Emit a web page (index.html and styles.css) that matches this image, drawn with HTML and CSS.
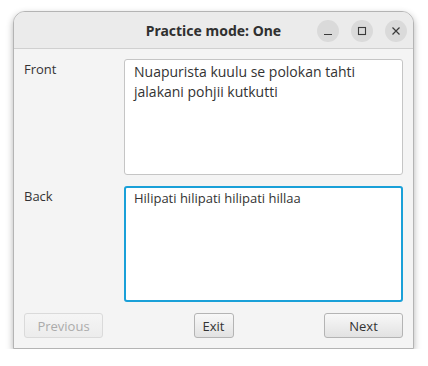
FILE: index.html
```html
<!DOCTYPE html>
<html lang="en">

<head>
  <meta charset="UTF-8">
  <meta name="viewport" content="width=device-width, initial-scale=1.0">
  <title>Practice mode: One</title>
  <link rel="stylesheet" href="styles.css">
</head>

<body>
  <div class="window">
    <header class="titlebar">
      <span></span>
      <h1 class="title">Practice mode: One</h1>
      <div class="controls">
        <button class="ctl" aria-label="Minimize">
          <svg width="10" height="10" viewBox="0 0 10 10"><path d="M1 8.5h8" stroke="#3a3a3a" stroke-width="1.2" /></svg>
        </button>
        <button class="ctl" aria-label="Maximize">
          <svg width="10" height="10" viewBox="0 0 10 10"><rect x="1.5" y="1.5" width="7" height="7" fill="none" stroke="#3a3a3a" stroke-width="1.1" /></svg>
        </button>
        <button class="ctl" aria-label="Close">
          <svg width="10" height="10" viewBox="0 0 10 10"><path d="M1.5 1.5l7 7M8.5 1.5l-7 7" stroke="#3a3a3a" stroke-width="1.2" /></svg>
        </button>
      </div>
    </header>

    <main class="content">
      <label class="field-label" for="front">Front</label>
      <textarea id="front" class="card-text front">Nuapurista kuulu se polokan tahti jalakani pohjii kutkutti</textarea>

      <label class="field-label" for="back">Back</label>
      <textarea id="back" class="card-text focused">Hilipati hilipati hilipati hillaa</textarea>

      <div class="actions">
        <button class="btn prev" disabled>Previous</button>
        <button class="btn exit">Exit</button>
        <button class="btn next">Next</button>
      </div>
    </main>
  </div>
</body>

</html>
```

FILE: styles.css
```css
body {
  margin: 0;
  background: white;
  font-family: "Open Sans", "Noto Sans", sans-serif;
  font-size: 13px;
  color: #333;
}

.window {
  margin: 11px 0 0 13px;
  width: 399px;
  height: 336px;
  border: 1px solid #b4b4b4;
  border-radius: 12px 12px 0 0;
  background: #f4f4f4;
  box-shadow: 0 3px 7px rgba(0, 0, 0, 0.3);
  overflow: hidden;
  display: flex;
  flex-direction: column;
}

.titlebar {
  height: 36px;
  background: #ebebeb;
  border-bottom: 1px solid #d0d0d0;
  display: grid;
  grid-template-columns: 1fr auto 1fr;
  align-items: center;
}

.title {
  margin: 0;
  font-family: "Noto Sans", "Open Sans", sans-serif;
  font-size: 14px;
  font-weight: bold;
  color: #303030;
  padding-top: 1px;
}

.controls {
  display: flex;
  justify-content: flex-end;
  gap: 12px;
  padding-right: 6px;
  padding-top: 1px;
}

.ctl {
  width: 22px;
  height: 22px;
  border-radius: 50%;
  border: none;
  padding: 0;
  background: #dadada;
  display: flex;
  align-items: center;
  justify-content: center;
}

.content {
  flex: 1;
  padding: 10px 10px 10px 10px;
  display: grid;
  grid-template-columns: 100px 1fr;
  grid-template-rows: 116px 116px 25px;
  row-gap: 11px;
}

.field-label {
  padding: 1px 0 0 0;
  color: #333;
}

.card-text {
  margin: 0;
  resize: none;
  box-sizing: border-box;
  width: 100%;
  height: 100%;
  font-family: "Open Sans", "Noto Sans", sans-serif;
  font-size: 13px;
  line-height: 20px;
  color: #333;
  background: white;
  border: 1px solid #c5c5c5;
  border-radius: 3px;
  padding: 1px 9px;
  outline: none;
}

.card-text.front {
  font-size: 14px;
  padding-top: 2px;
}

.card-text.focused {
  border: 2px solid #1aa0d8;
  padding: 0 8px;
}

.actions {
  grid-column: 1 / 3;
  display: grid;
  grid-template-columns: 1fr auto 1fr;
  align-items: stretch;
}

.btn {
  font-family: "Open Sans", "Noto Sans", sans-serif;
  font-size: 13px;
  color: #333;
  border: 1px solid #b4b4b4;
  border-radius: 3px;
  background: linear-gradient(#f8f8f8, #e2e2e2);
  padding: 0 8px;
}

.btn.prev {
  justify-self: start;
  width: 79px;
  color: #ababab;
  border-color: #dadada;
  background: linear-gradient(#f5f5f5, #ececec);
}

.btn.exit {
  width: 40px;
}

.btn.next {
  justify-self: end;
  width: 79px;
}
```
